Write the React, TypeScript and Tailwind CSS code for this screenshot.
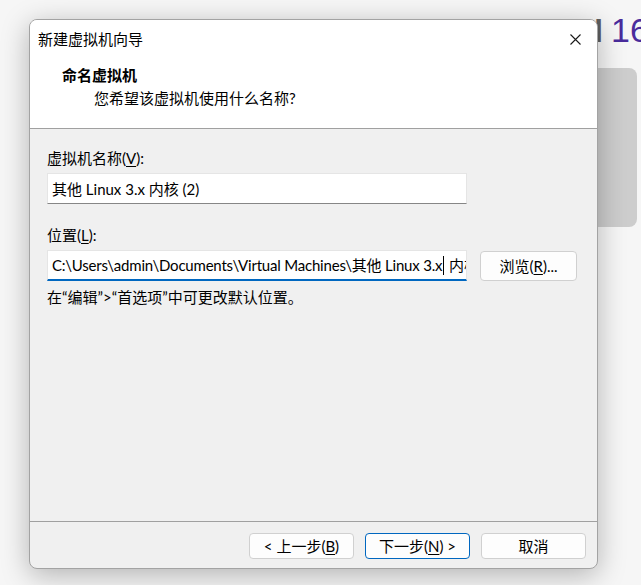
import React from "react";

const font = "font-['Lato','Noto_Sans_CJK_SC',sans-serif]";

function Btn({ children, primary }: { children: React.ReactNode; primary?: boolean }) {
  return (
    <button
      className={`h-[26px] w-[105px] rounded-[4px] border bg-[#fdfdfd] text-[15px] leading-none text-black ${
        primary ? "border-[#0067c0]" : "border-[#d0d0d0]"
      }`}
    >
      {children}
    </button>
  );
}

export default function App() {
  return (
    <div className={`relative w-[641px] h-[585px] overflow-hidden bg-[#f6f6f6] ${font}`}>
      {/* background app behind the dialog */}
      <span className="absolute right-[38px] top-[10px] text-[34px] font-bold leading-[40px] text-[#5f5f5f] font-['Liberation_Sans',sans-serif]">
        WORKSTATION
      </span>
      <span className="absolute left-[611px] top-[10px] text-[34px] leading-[40px] text-[#4a2c9c] font-['Liberation_Sans',sans-serif]">
        16
      </span>
      <div className="absolute left-[560px] top-[68px] h-[159px] w-[77px] rounded-[8px] bg-[#cdcdcd]" />

      <div className="relative pl-[29px] pt-[19px]">
        <div className="flex h-[550px] w-[569px] flex-col overflow-hidden rounded-[8px] border border-[#a3a3a3] bg-[#f0f0f0] shadow-[0_6px_28px_rgba(0,0,0,0.28)]">
          {/* header */}
          <div className="border-b border-[#a0a0a0] bg-white pb-[20px]">
            <div className="flex h-[38px] items-center justify-between pl-[8px] pr-[16px]">
              <span className="text-[15px] text-black">新建虚拟机向导</span>
              <svg width="11" height="11" viewBox="0 0 11 11">
                <path d="M0.5 0.5 L10.5 10.5 M10.5 0.5 L0.5 10.5" stroke="#1a1a1a" strokeWidth="1.1" />
              </svg>
            </div>
            <div className="mt-[7px] pl-[32px] text-[15px] font-bold leading-[20px] text-black">命名虚拟机</div>
            <div className="mt-[3px] pl-[64px] text-[15px] leading-[20px] text-black">您希望该虚拟机使用什么名称?</div>
          </div>

          {/* body */}
          <div className="flex-1 px-[17px] pt-[19px] text-[15px] leading-[20px] text-black">
            <div>
              虚拟机名称(<span className="underline underline-offset-2">V</span>):
            </div>
            <div className="mt-[5px] flex h-[31px] w-[420px] items-center border border-b-[#868686] border-[#e5e5e5] bg-white pl-[4px]">
              其他 Linux 3.x 内核 (2)
            </div>

            <div className="mt-[21px]">
              位置(<span className="underline underline-offset-2">L</span>):
            </div>
            <div className="mt-[5px] flex items-center gap-[13px]">
              <div className="flex h-[31px] w-[420px] shrink-0 items-center overflow-hidden whitespace-nowrap border border-[#e5e5e5] border-b-2 border-b-[#0067c0] bg-white pl-[4px]">
                <span className="tracking-[-0.2px]">C:\Users\admin\Documents\Virtual Machines\其他 Linux 3.x</span>
                <span className="mx-[1px] inline-block h-[19px] w-[1px] shrink-0 bg-black" />
                <span>&nbsp;内核</span>
              </div>
              <button className="h-[30px] w-[97px] shrink-0 rounded-[4px] border border-[#d0d0d0] bg-[#fdfdfd] text-[15px]">
                浏览(<span className="underline underline-offset-2">R</span>)...
              </button>
            </div>
            <div className="mt-[6px]">在“编辑”&gt;“首选项”中可更改默认位置。</div>
          </div>

          {/* footer */}
          <div className="flex h-[47px] justify-end gap-[11px] border-t border-[#a0a0a0] pr-[11px] pt-[11px]">
            <Btn>
              &lt; 上一步(<span className="underline underline-offset-2">B</span>)
            </Btn>
            <Btn primary>
              下一步(<span className="underline underline-offset-2">N</span>) &gt;
            </Btn>
            <Btn>取消</Btn>
          </div>
        </div>
      </div>
    </div>
  );
}
